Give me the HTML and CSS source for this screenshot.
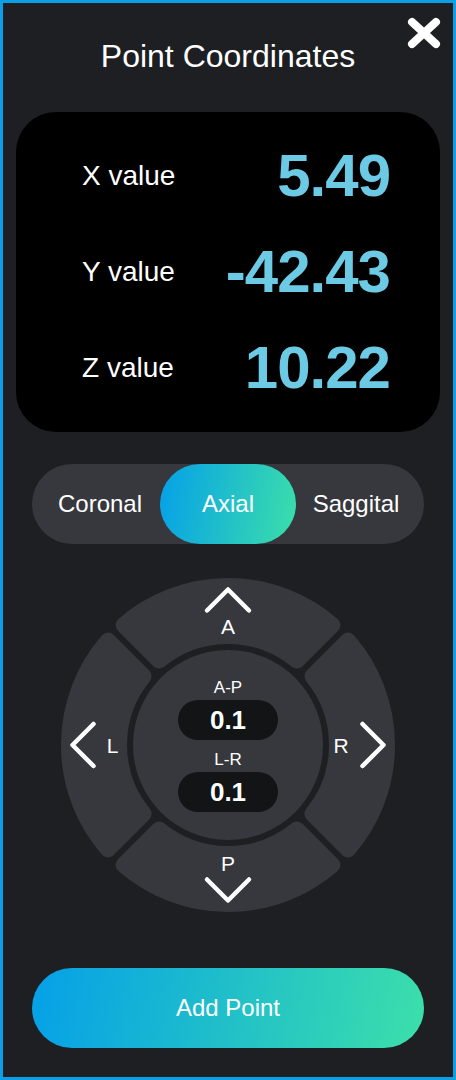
FILE: index.html
```html
<!DOCTYPE html>
<html lang="en">
<head>
<meta charset="utf-8">
<title>Point Coordinates</title>
<link rel="stylesheet" href="styles.css">
</head>
<body>
<div class="panel">
  <button class="close" aria-label="Close">
    <svg viewBox="0 0 34 32" width="34" height="32"><path d="M5 5 L29 27 M29 5 L5 27" stroke="#fff" stroke-width="8" stroke-linecap="round" fill="none"/></svg>
  </button>
  <h1 class="title">Point Coordinates</h1>

  <div class="card">
    <div class="row"><span class="label">X value</span><span class="value">5.49</span></div>
    <div class="row"><span class="label">Y value</span><span class="value">-42.43</span></div>
    <div class="row"><span class="label">Z value</span><span class="value">10.22</span></div>
  </div>

  <div class="segment">
    <div class="seg">Coronal</div>
    <div class="seg active">Axial</div>
    <div class="seg">Saggital</div>
  </div>

  <div class="pad">
    <svg class="pad-bg" viewBox="-168 -168 336 336" width="336" height="336">
      <g fill="#36383d" stroke="#36383d" stroke-width="16" stroke-linejoin="round">
        <path d="M-68.90,-84.46 L-104.38,-119.94 A159 159 0 0 1 104.38,-119.94 L68.90,-84.46 A109 109 0 0 0 -68.90,-84.46 Z"/>
        <path transform="rotate(90)" d="M-68.90,-84.46 L-104.38,-119.94 A159 159 0 0 1 104.38,-119.94 L68.90,-84.46 A109 109 0 0 0 -68.90,-84.46 Z"/>
        <path transform="rotate(180)" d="M-68.90,-84.46 L-104.38,-119.94 A159 159 0 0 1 104.38,-119.94 L68.90,-84.46 A109 109 0 0 0 -68.90,-84.46 Z"/>
        <path transform="rotate(270)" d="M-68.90,-84.46 L-104.38,-119.94 A159 159 0 0 1 104.38,-119.94 L68.90,-84.46 A109 109 0 0 0 -68.90,-84.46 Z"/>
      </g>
      <circle r="95" fill="#36383d"/>
      <g fill="none" stroke="#fff" stroke-width="4.5" stroke-linecap="round" stroke-linejoin="round">
        <path d="M-21,-134.5 L0,-155.5 L21,-134.5"/>
        <path d="M-21,134.5 L0,155.5 L21,134.5"/>
        <path d="M-134.5,-21 L-155.5,0 L-134.5,21"/>
        <path d="M134.5,-21 L155.5,0 L134.5,21"/>
      </g>
    </svg>
    <span class="dir dir-a">A</span>
    <span class="dir dir-l">L</span>
    <span class="dir dir-r">R</span>
    <span class="dir dir-p">P</span>
    <div class="center">
      <div class="step-label">A-P</div>
      <div class="step-pill">0.1</div>
      <div class="step-label second">L-R</div>
      <div class="step-pill">0.1</div>
    </div>
  </div>

  <button class="add">Add Point</button>
</div>
</body>
</html>
```

FILE: styles.css
```css
* { box-sizing: border-box; }

html, body {
  margin: 0;
  padding: 0;
  background: #1e1f22;
}

body {
  font-family: "Liberation Sans", Arial, sans-serif;
  color: #fff;
}

.panel {
  position: relative;
  width: 456px;
  height: 1080px;
  border: 3px solid #0a9fe7;
  background: #1e1f22;
  display: flex;
  flex-direction: column;
}

.close {
  position: absolute;
  top: 14px;
  right: 12px;
  width: 34px;
  height: 32px;
  padding: 0;
  border: 0;
  background: none;
  display: block;
}
.close svg { display: block; }

.title {
  margin: 35px 0 0;
  font-size: 32px;
  line-height: 36px;
  font-weight: normal;
  text-align: center;
}

.card {
  margin: 38px 13px 0;
  height: 320px;
  padding: 16px 51px 16px 66px;
  background: #000;
  border-radius: 40px;
  display: flex;
  flex-direction: column;
}

.row {
  height: 96px;
  display: flex;
  align-items: center;
  justify-content: space-between;
}

.label {
  font-size: 28px;
  line-height: 32px;
}

.value {
  font-size: 60px;
  line-height: 64px;
  font-weight: bold;
  color: #6ccae4;
  letter-spacing: -1px;
  margin-right: -1px;
}

.segment {
  margin: 32px 29px 0;
  height: 80px;
  padding: 0 8px;
  border-radius: 40px;
  background: #36383d;
  display: grid;
  grid-template-columns: 120px 136px 120px;
}

.seg {
  display: flex;
  align-items: center;
  justify-content: center;
  font-size: 24px;
}

.seg.active {
  border-radius: 40px;
  background: linear-gradient(100deg, #05a0e8 0%, #3cdfaa 100%);
}

.pad {
  position: relative;
  margin: 33px auto 0;
  width: 336px;
  height: 336px;
}

.pad-bg {
  position: absolute;
  left: 0;
  top: 0;
  display: block;
}

.dir {
  position: absolute;
  transform: translate(-50%, -50%);
  font-size: 21px;
  line-height: 21px;
}
.dir-a { left: 168px; top: 48.5px; }
.dir-l { left: 52.5px; top: 168px; }
.dir-r { left: 281px; top: 168px; }
.dir-p { left: 168px; top: 285.5px; }

.center {
  position: absolute;
  left: 118px;
  top: 101px;
  width: 100px;
  display: flex;
  flex-direction: column;
  align-items: center;
}

.step-label {
  font-size: 17px;
  line-height: 20px;
  margin-bottom: 2px;
}
.step-label.second { margin-top: 10px; }

.step-pill {
  width: 100px;
  height: 40px;
  border-radius: 20px;
  background: #121416;
  font-size: 26px;
  line-height: 40px;
  font-weight: bold;
  text-align: center;
}

.add {
  margin: 55px 29px 0;
  height: 80px;
  border: 0;
  border-radius: 40px;
  background: linear-gradient(100deg, #05a0e8 0%, #3cdfaa 100%);
  color: #fff;
  font-family: "Liberation Sans", Arial, sans-serif;
  font-size: 24px;
}
```
